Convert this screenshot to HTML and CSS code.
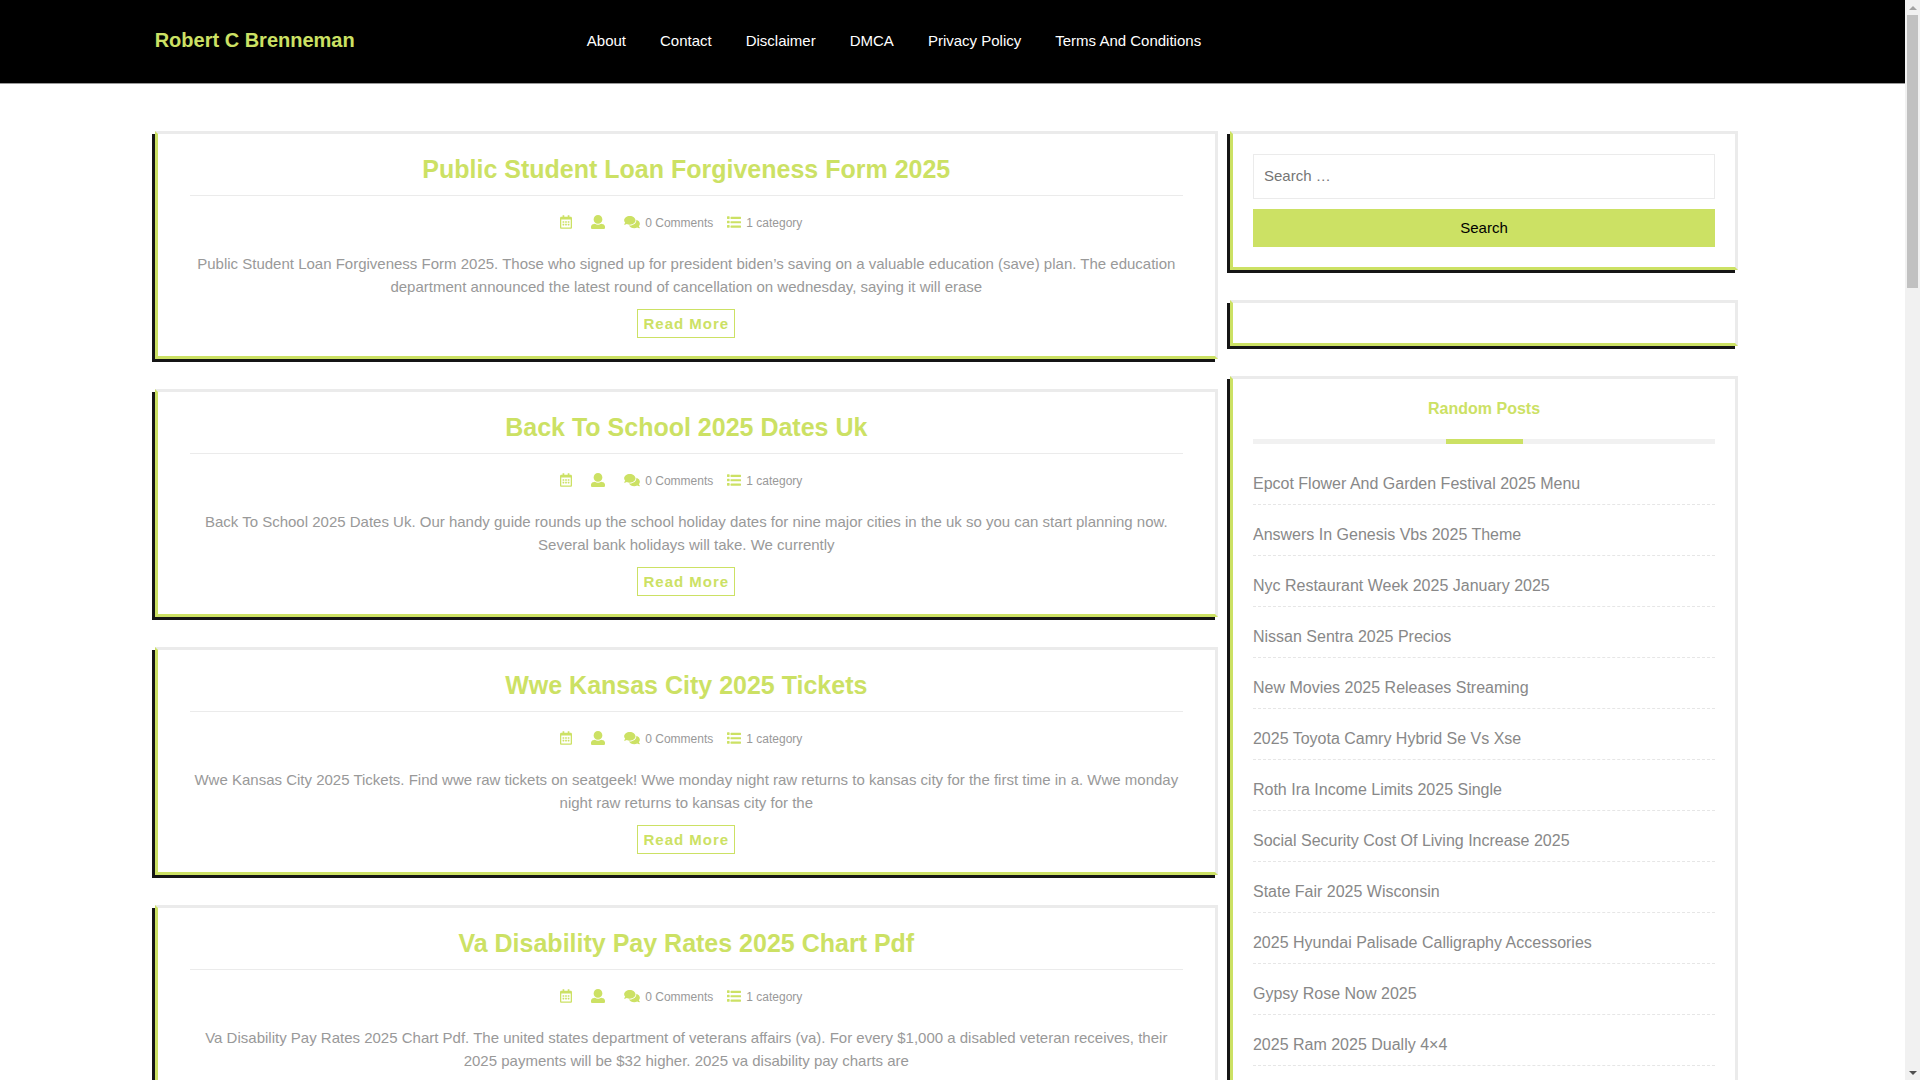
FILE: index.html
```html
<!DOCTYPE html>
<html lang="en">
<head>
  <meta charset="UTF-8">
  <meta name="viewport" content="width=device-width, initial-scale=1.0">
  <title>Robert C Brenneman</title>
  <link rel="stylesheet" href="styles.css">
</head>
<body>
  <svg class="sprite" aria-hidden="true">
    <symbol id="icon-calendar" viewBox="0 0 448 512"><path d="M148 288h-40c-6.6 0-12-5.4-12-12v-40c0-6.6 5.4-12 12-12h40c6.6 0 12 5.4 12 12v40c0 6.6-5.4 12-12 12zm108-12v-40c0-6.600-5.400-12-12-12h-40c-6.600 0-12 5.400-12 12v40c0 6.600 5.400 12 12 12h40c6.600 0 12-5.400 12-12zm96 0v-40c0-6.600-5.400-12-12-12h-40c-6.600 0-12 5.400-12 12v40c0 6.600 5.400 12 12 12h40c6.600 0 12-5.400 12-12zm-96 96v-40c0-6.600-5.400-12-12-12h-40c-6.600 0-12 5.400-12 12v40c0 6.600 5.400 12 12 12h40c6.600 0 12-5.400 12-12zm-96 0v-40c0-6.600-5.400-12-12-12h-40c-6.600 0-12 5.400-12 12v40c0 6.600 5.400 12 12 12h40c6.600 0 12-5.400 12-12zm192 0v-40c0-6.600-5.400-12-12-12h-40c-6.600 0-12 5.400-12 12v40c0 6.600 5.400 12 12 12h40c6.600 0 12-5.400 12-12zm96-260v352c0 26.500-21.500 48-48 48H48c-26.500 0-48-21.500-48-48V112c0-26.500 21.500-48 48-48h48V12c0-6.600 5.400-12 12-12h40c6.600 0 12 5.400 12 12v52h128V12c0-6.600 5.400-12 12-12h40c6.600 0 12 5.400 12 12v52h48c26.500 0 48 21.500 48 48zm-48 346V160H48v298c0 3.300 2.700 6 6 6h340c3.300 0 6-2.700 6-6z"/></symbol>
    <symbol id="icon-user" viewBox="0 0 512 512"><path d="M256 0c88.366 0 160 71.634 160 160s-71.634 160-160 160S96 248.366 96 160 167.634 0 256 0zm183.283 333.821l-71.313-17.828c-74.923 53.890-165.738 41.864-223.940 0l-71.313 17.828C29.981 344.505 0 382.903 0 426.955V464c0 26.510 21.490 48 48 48h416c26.510 0 48-21.490 48-48v-37.045c0-44.052-29.981-82.450-72.717-93.134z"/></symbol>
    <symbol id="icon-comments" viewBox="0 0 576 512"><path d="M416 192c0-88.400-93.100-160-208-160S0 103.600 0 192c0 34.300 14.100 65.900 38 92-13.400 30.200-35.500 54.200-35.800 54.500-2.200 2.300-2.800 5.700-1.500 8.700S4.800 352 8 352c36.600 0 66.900-12.300 88.700-25 32.200 15.700 70.300 25 111.300 25 114.900 0 208-71.600 208-160zm122 220c23.900-26 38-57.700 38-92 0-66.900-53.500-124.200-129.300-148.100.9 6.600 1.300 13.300 1.300 20.100 0 105.900-107.700 192-240 192-10.800 0-21.300-.8-31.700-1.900C207.800 439.600 281.800 480 368 480c41 0 79.100-9.200 111.300-25 21.800 12.700 52.100 25 88.700 25 3.200 0 6.100-1.900 7.300-4.800 1.300-2.900.7-6.300-1.500-8.700-.3-.3-22.400-24.200-35.800-54.500z"/></symbol>
    <symbol id="icon-list" viewBox="0 0 512 512"><path d="M80 368H16a16 16 0 0 0-16 16v64a16 16 0 0 0 16 16h64a16 16 0 0 0 16-16v-64a16 16 0 0 0-16-16zm0-320H16A16 16 0 0 0 0 64v64a16 16 0 0 0 16 16h64a16 16 0 0 0 16-16V64a16 16 0 0 0-16-16zm0 160H16a16 16 0 0 0-16 16v64a16 16 0 0 0 16 16h64a16 16 0 0 0 16-16v-64a16 16 0 0 0-16-16zm416 176H144a16 16 0 0 0-16 16v48a16 16 0 0 0 16 16h352a16 16 0 0 0 16-16v-48a16 16 0 0 0-16-16zm0-320H144a16 16 0 0 0-16 16v48a16 16 0 0 0 16 16h352a16 16 0 0 0 16-16V80a16 16 0 0 0-16-16zm0 160H144a16 16 0 0 0-16 16v48a16 16 0 0 0 16 16h352a16 16 0 0 0 16-16v-48a16 16 0 0 0-16-16z"/></symbol>
  </svg>

  <div class="page">
    <header class="site-header">
      <div class="container header-inner">
        <a class="logo" href="#">Robert C Brenneman</a>
        <nav class="main-nav">
          <a href="#">About</a>
          <a href="#">Contact</a>
          <a href="#">Disclaimer</a>
          <a href="#">DMCA</a>
          <a href="#">Privacy Policy</a>
          <a href="#">Terms And Conditions</a>
        </nav>
      </div>
    </header>

    <div class="container content">
      <main>
        <article class="box post">
          <h2><a href="#">Public Student Loan Forgiveness Form 2025</a></h2>
          <div class="meta">
            <span><svg class="icon icon-narrow"><use href="#icon-calendar"/></svg></span>
            <span><svg class="icon"><use href="#icon-user"/></svg></span>
            <span><svg class="icon icon-wide"><use href="#icon-comments"/></svg>0 Comments</span>
            <span><svg class="icon"><use href="#icon-list"/></svg>1 category</span>
          </div>
          <p>Public Student Loan Forgiveness Form 2025. Those who signed up for president biden’s saving on a valuable education (save) plan. The education department announced the latest round of cancellation on wednesday, saying it will erase</p>
          <a class="read-more" href="#">Read More</a>
        </article>

        <article class="box post">
          <h2><a href="#">Back To School 2025 Dates Uk</a></h2>
          <div class="meta">
            <span><svg class="icon icon-narrow"><use href="#icon-calendar"/></svg></span>
            <span><svg class="icon"><use href="#icon-user"/></svg></span>
            <span><svg class="icon icon-wide"><use href="#icon-comments"/></svg>0 Comments</span>
            <span><svg class="icon"><use href="#icon-list"/></svg>1 category</span>
          </div>
          <p>Back To School 2025 Dates Uk. Our handy guide rounds up the school holiday dates for nine major cities in the uk so you can start planning now. Several bank holidays will take. We currently</p>
          <a class="read-more" href="#">Read More</a>
        </article>

        <article class="box post">
          <h2><a href="#">Wwe Kansas City 2025 Tickets</a></h2>
          <div class="meta">
            <span><svg class="icon icon-narrow"><use href="#icon-calendar"/></svg></span>
            <span><svg class="icon"><use href="#icon-user"/></svg></span>
            <span><svg class="icon icon-wide"><use href="#icon-comments"/></svg>0 Comments</span>
            <span><svg class="icon"><use href="#icon-list"/></svg>1 category</span>
          </div>
          <p>Wwe Kansas City 2025 Tickets. Find wwe raw tickets on seatgeek! Wwe monday night raw returns to kansas city for the first time in a. Wwe monday night raw returns to kansas city for the</p>
          <a class="read-more" href="#">Read More</a>
        </article>

        <article class="box post">
          <h2><a href="#">Va Disability Pay Rates 2025 Chart Pdf</a></h2>
          <div class="meta">
            <span><svg class="icon icon-narrow"><use href="#icon-calendar"/></svg></span>
            <span><svg class="icon"><use href="#icon-user"/></svg></span>
            <span><svg class="icon icon-wide"><use href="#icon-comments"/></svg>0 Comments</span>
            <span><svg class="icon"><use href="#icon-list"/></svg>1 category</span>
          </div>
          <p>Va Disability Pay Rates 2025 Chart Pdf. The united states department of veterans affairs (va). For every $1,000 a disabled veteran receives, their 2025 payments will be $32 higher. 2025 va disability pay charts are</p>
        </article>
      </main>

      <aside>
        <section class="box widget">
          <form class="search-form">
            <input type="search" placeholder="Search …" aria-label="Search for:">
            <button type="submit">Search</button>
          </form>
        </section>

        <section class="box widget"></section>

        <section class="box widget">
          <h3>Random Posts</h3>
          <ul>
            <li><a href="#">Epcot Flower And Garden Festival 2025 Menu</a></li>
            <li><a href="#">Answers In Genesis Vbs 2025 Theme</a></li>
            <li><a href="#">Nyc Restaurant Week 2025 January 2025</a></li>
            <li><a href="#">Nissan Sentra 2025 Precios</a></li>
            <li><a href="#">New Movies 2025 Releases Streaming</a></li>
            <li><a href="#">2025 Toyota Camry Hybrid Se Vs Xse</a></li>
            <li><a href="#">Roth Ira Income Limits 2025 Single</a></li>
            <li><a href="#">Social Security Cost Of Living Increase 2025</a></li>
            <li><a href="#">State Fair 2025 Wisconsin</a></li>
            <li><a href="#">2025 Hyundai Palisade Calligraphy Accessories</a></li>
            <li><a href="#">Gypsy Rose Now 2025</a></li>
            <li><a href="#">2025 Ram 2025 Dually 4×4</a></li>
          </ul>
        </section>
      </aside>
    </div>
  </div>

  <div class="scrollbar" aria-hidden="true">
    <span class="arrow arrow-up"></span>
    <span class="track"><span class="thumb"></span></span>
    <span class="arrow arrow-down"></span>
  </div>
</body>
</html>
```

FILE: styles.css
```css
* {
  box-sizing: border-box;
}
body {
  display: flex;
  height: 100vh;
  margin: 0;
  overflow: hidden;
  background: #fff;
  color: #999;
  font-family: "Liberation Sans", Arial, Helvetica, sans-serif;
  font-size: 15px;
  line-height: 23px;
}
a {
  color: inherit;
  text-decoration: none;
}
.sprite {
  position: absolute;
  width: 0;
  height: 0;
}
.page {
  flex: 1;
  min-width: 0;
  overflow: hidden;
}
.container {
  width: 83.12%;
  margin-left: 8.12%;
}

/* Header */
.site-header {
  background: #000;
  border-bottom: 1px solid #999;
}
.header-inner {
  display: grid;
  grid-template-columns: 432fr 1151fr;
  align-items: center;
  height: 83px;
  padding-bottom: 2px;
}
.logo {
  color: #cce164;
  font-size: 20px;
  font-weight: bold;
}
.main-nav {
  display: flex;
  gap: 34px;
  color: #fff;
}

/* Layout */
.content {
  display: grid;
  grid-template-columns: 1063fr 508fr;
  gap: 12px;
  padding-top: 47px;
}
.box {
  margin-bottom: 30px;
  border: 3px solid #ebebeb;
  border-left-color: #cce164;
  border-bottom-color: #cce164;
  box-shadow: -3px 3px 0 #151515;
}

/* Posts */
.post {
  padding: 20px 32px 18px;
  text-align: center;
}
.post h2 {
  margin: 0 0 16px;
  padding-bottom: 11px;
  border-bottom: 1px solid #ebebeb;
  color: #cce164;
  font-size: 25px;
  line-height: 30px;
}
.meta {
  display: flex;
  justify-content: center;
  gap: 14px;
  padding-right: 10px;
  font-size: 12px;
  line-height: 22px;
}
.meta span {
  display: flex;
  align-items: flex-start;
}
.icon {
  width: 14px;
  height: 14px;
  margin: 3px 5px 0 0;
  fill: #cce164;
}
.icon-narrow {
  width: 12px;
}
.icon-wide {
  width: 16px;
}
.post p {
  margin: 18px 0 11px;
}
.read-more {
  display: block;
  width: fit-content;
  margin: 0 auto;
  padding: 2px 5px;
  border: 1px solid #cce164;
  color: #cce164;
  font-weight: bold;
  letter-spacing: 1px;
}

/* Sidebar */
.widget {
  padding: 20px;
}
.search-form {
  display: grid;
  gap: 10px;
}
.search-form input {
  width: 100%;
  height: 45px;
  padding: 0 10px 2px;
  border: 1px solid #ebebeb;
  font: inherit;
}
.search-form button {
  height: 38px;
  padding: 0 0 2px;
  border: 0;
  background: #cce164;
  color: #000;
  font: inherit;
}
.widget h3 {
  margin: 0 0 20px;
  color: #cce164;
  font-size: 16px;
  line-height: 20px;
  text-align: center;
}
.widget h3::after {
  content: "";
  display: block;
  height: 5px;
  margin-top: 20px;
  background: linear-gradient(#cce164, #cce164) center / 77px 5px no-repeat #f1f1f1;
}
.widget ul {
  margin: 0;
  padding: 0;
  list-style: none;
}
.widget li {
  padding: 10px 0;
  border-bottom: 1px dashed #e6e6e6;
  color: #888;
  font-size: 16px;
  line-height: 20px;
}
.widget li + li {
  padding-top: 20px;
}

/* Scrollbar */
.scrollbar {
  display: flex;
  flex-direction: column;
  align-items: center;
  width: 15px;
  background: #f1f1f1;
}
.track {
  flex: 1;
  width: 11px;
}
.thumb {
  display: block;
  height: 26%;
  background: #c1c1c1;
}
.arrow {
  display: flex;
  align-items: center;
  justify-content: center;
  height: 15px;
}
.arrow::before {
  content: "";
  border: 4px solid transparent;
}
.arrow-up::before {
  border-top: 0;
  border-bottom-color: #a3a3a3;
}
.arrow-down::before {
  border-bottom: 0;
  border-top-color: #505050;
}
```
